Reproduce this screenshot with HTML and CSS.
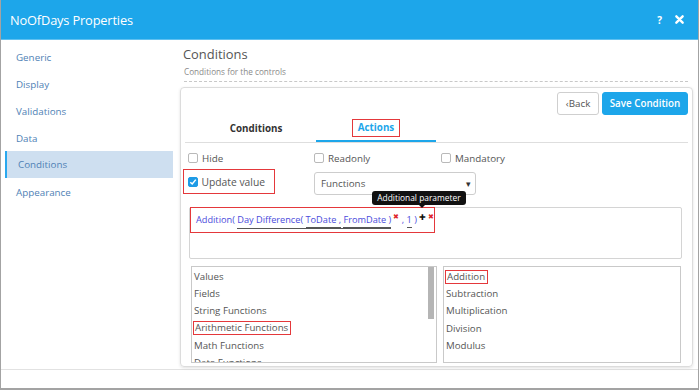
FILE: index.html
```html
<!DOCTYPE html>
<html>
<head>
<meta charset="utf-8">
<link rel="stylesheet" href="styles.css">
</head>
<body>
<div class="window">
  <header class="titlebar">
    <span class="title">NoOfDays Properties</span>
    <span class="tools">
      <span class="help">?</span>
      <svg class="close" width="10" height="10" viewBox="0 0 10 10"><path d="M1.5 1.5 L8.5 8.5 M8.5 1.5 L1.5 8.5" stroke="#fff" stroke-width="2.6" stroke-linecap="round"/></svg>
    </span>
  </header>
  <div class="main">
    <nav class="sidebar">
      <div class="nav-item">Generic</div>
      <div class="nav-item">Display</div>
      <div class="nav-item">Validations</div>
      <div class="nav-item">Data</div>
      <div class="nav-item active">Conditions</div>
      <div class="nav-item">Appearance</div>
    </nav>
    <section class="content">
      <h1 class="heading">Conditions</h1>
      <p class="subtitle">Conditions for the controls</p>
      <div class="card">
        <div class="btn-row">
          <button class="btn back">&lsaquo;Back</button>
          <button class="btn save">Save Condition</button>
        </div>
        <div class="tabs">
          <div class="tab">Conditions</div>
          <div class="tab active"><span class="hl">Actions</span></div>
        </div>
        <div class="checks">
          <label class="chk"><span class="box"></span>Hide</label>
          <label class="chk"><span class="box"></span>Readonly</label>
          <label class="chk"><span class="box"></span>Mandatory</label>
        </div>
        <div class="update-row">
          <div class="upd hl-box"><span class="box checked"><svg width="8" height="8" viewBox="0 0 8 8"><path d="M1.3 4.2 L3.2 6 L6.8 1.6" stroke="#fff" stroke-width="1.5" fill="none"/></svg></span>Update value</div>
          <div class="select">Functions<span class="caret">&#9662;</span></div>
        </div>
        <div class="expr-box">
          <div class="expr hl-box">
            <span>Addition(</span>
            <span class="u outer">Day Difference( <span class="u inner">ToDate ,</span> <span class="u inner">FromDate )</span></span><span class="del">&#10006;</span>
            <span>,</span> <span class="u inner">1</span> <span>)</span>
            <span class="ops"><span class="add">&#10010;</span><span class="del">&#10006;</span><span class="tip">Additional parameter</span></span>
          </div>
        </div>
        <div class="lists">
          <div class="list left">
            <div class="items">
              <div class="item">Values</div>
              <div class="item">Fields</div>
              <div class="item">String Functions</div>
              <div class="item"><span class="hl-item">Arithmetic Functions</span></div>
              <div class="item">Math Functions</div>
              <div class="item">Date Functions</div>
            </div>
            <div class="scroll"><div class="thumb"></div></div>
          </div>
          <div class="list right">
            <div class="items">
              <div class="item"><span class="hl-item">Addition</span></div>
              <div class="item">Subtraction</div>
              <div class="item">Multiplication</div>
              <div class="item">Division</div>
              <div class="item">Modulus</div>
            </div>
          </div>
        </div>
      </div>
    </section>
  </div>
  <footer class="footer"></footer>
</div>
</body>
</html>
```

FILE: styles.css
```css
* { box-sizing: border-box; }
html, body { margin: 0; padding: 0; background: #fff; }
body { font-family: "Open Sans", "Noto Sans", sans-serif; color: #444; }

.window {
  width: 699px;
  height: 390px;
  border: 1px solid #a3a3a3;
  border-top: 0;
  display: flex;
  flex-direction: column;
  overflow: hidden;
}

.titlebar {
  height: 40px;
  flex: none;
  background: #1da6ea;
  border-bottom: 1px solid #5fc0f0;
  display: flex;
  align-items: center;
  justify-content: space-between;
  padding: 0 14px 0 9px;
  color: #fff;
}
.title { font-size: 12.8px; letter-spacing: -0.15px; }
.tools { display: flex; align-items: center; gap: 13px; }
.help { font-size: 10px; font-weight: 700; }
.close { display: block; width: 9px; height: 9px; }

.main { flex: 1; display: flex; min-height: 0; }

.sidebar { width: 172px; flex: none; padding-top: 4px; }
.nav-item {
  height: 27px;
  margin-left: 4px;
  padding-left: 11px;
  display: flex;
  align-items: center;
  font-size: 9.8px;
  color: #4f7fb5;
}
.nav-item.active {
  background: #cedff0;
  border-left: 2px solid #2aa8ee;
}
.sidebar .nav-item.active { margin-top: -1px; margin-bottom: 1px; }

.content { flex: 1; padding: 0 5px 0 7px; min-width: 0; }
.heading {
  margin: 0;
  padding: 5px 0 0 3px;
  font-size: 12.9px;
  font-weight: 400;
  color: #555;
  line-height: 19px;
}
.subtitle {
  margin: 0 5px 0 4px;
  padding: 1px 0 3px;
  font-size: 8.2px;
  color: #8a8a8a;
  line-height: 13px;
  border-bottom: 1px dashed #c8c8c8;
}

.card {
  margin-top: 5px;
  height: 280px;
  border: 1px solid #dcdcdc;
  border-radius: 4px;
  box-shadow: 0 1px 3px rgba(0,0,0,0.12);
  padding: 4px 4px 0 4px;
  position: relative;
}

.btn-row { display: flex; justify-content: flex-end; gap: 3px; }
.btn {
  height: 23px;
  border-radius: 3px;
  font-family: inherit;
  font-size: 9.8px;
  padding: 0;
  white-space: nowrap;
  cursor: pointer;
}
.btn.back { background: #fff; border: 1px solid #cfcfcf; color: #555; width: 42px; }
.btn.save { background: #1da6ea; border: 1px solid #1da6ea; color: #fff; font-weight: 600; width: 86px; }

.tabs {
  display: flex;
  padding-left: 11px;
  border-bottom: 1px solid #dedede;
  height: 28px;
}
.tab {
  width: 120px;
  display: flex;
  align-items: center;
  justify-content: center;
  font-size: 9.8px;
  font-weight: 700;
  color: #333;
}
.tab.active { color: #1da6ea; border-bottom: 2px solid #1da6ea; }
.tab .hl { border: 1.5px solid #e4383b; padding: 1px 5px 2px; }

.checks {
  display: grid;
  grid-template-columns: 126px 127px auto;
  padding: 8px 0 0 3px;
  height: 27px;
}
.chk { display: flex; align-items: center; font-size: 9.8px; color: #555; height: 14px; }
.box {
  width: 10px; height: 10px;
  border: 1px solid #b9b9b9;
  border-radius: 2px;
  margin-right: 4px;
  display: inline-flex;
  align-items: center;
  justify-content: center;
  flex: none;
}
.box.checked { background: #1e9be6; border-color: #1e9be6; }
.box.checked svg { display: block; }

.update-row { display: flex; align-items: flex-start; height: 37px; }
.upd {
  width: 92px;
  height: 25px;
  margin: -1px 0 0 -2px;
  display: flex;
  align-items: center;
  padding-left: 3.5px;
  font-size: 10.3px;
  color: #555;
}
.hl-box { border: 1.5px solid #e4383b; }
.select {
  margin-left: 39px;
  margin-top: 2px;
  width: 162px;
  height: 23px;
  border: 1px solid #cdcdcd;
  border-radius: 3px;
  font-size: 9.8px;
  color: #555;
  display: flex;
  align-items: center;
  justify-content: space-between;
  padding: 0 4px 0 6px;
}
.caret { font-size: 9px; color: #333; }

.expr-box {
  margin-left: 4px;
  margin-right: 6px;
  height: 52px;
  border: 1px solid #d4d4d4;
  border-radius: 2px;
}
.expr {
  width: 245px;
  height: 26px;
  margin-top: -1px;
  font-size: 9.2px;
  color: #4b4bdc;
  padding: 3px 0 0 5px;
  white-space: nowrap;
  position: relative;
}
.u { display: inline-block; border-bottom: 1px solid #555; }
.u.inner { line-height: 14px; }
.del { color: #e0262a; font-size: 7px; vertical-align: 4px; margin-left: 2px; }
.ops { position: relative; }
.add { color: #111; font-size: 8px; vertical-align: 3px; }
.tip {
  position: absolute;
  left: -47px;
  top: -22px;
  background: #111;
  color: #fff;
  font-size: 8.4px;
  padding: 0 5px;
  line-height: 14px;
  border-radius: 3px;
  white-space: nowrap;
}
.tip::after {
  content: "";
  position: absolute;
  left: 47px;
  bottom: -3px;
  border: 3px solid transparent;
  border-bottom: 0;
  border-top-color: #111;
}

.lists { display: flex; gap: 6px; margin-top: 7px; padding-left: 6px; padding-right: 7px; }
.list {
  height: 97px;
  border: 1px solid #c9c9c9;
  display: flex;
  overflow: hidden;
}
.list.left { width: 246px; }
.list.right { flex: 1; }
.items { flex: 1; padding: 1px 0 0 2px; }
.item { height: 17.2px; font-size: 9.7px; color: #555; display: flex; align-items: center; white-space: nowrap; }
.hl-item { border: 1.5px solid #e4383b; padding: 0 2px 0 1px; margin-left: -1px; line-height: 12px; }
.scroll { width: 8px; padding: 0 2px 0 0; }
.thumb { width: 6px; height: 52px; background: #b5b5b5; }

.footer { height: 20px; flex: none; border-top: 1px solid #e2e2e2; border-bottom: 1px solid #a3a3a3; }
```
